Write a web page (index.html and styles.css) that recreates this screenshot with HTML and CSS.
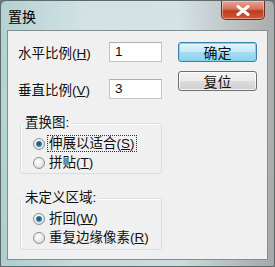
FILE: index.html
```html
<!DOCTYPE html>
<html lang="zh">
<head>
<meta charset="utf-8">
<link rel="stylesheet" href="styles.css">
</head>
<body>
<div class="window">
  <div class="titlebar">
    <span class="title">置换</span>
    <span class="close">
      <svg width="14" height="11" viewBox="0 0 14 11"><path d="M2 1.5 L12 9.5 M12 1.5 L2 9.5" stroke="#fff" stroke-width="3" stroke-linecap="round"/></svg>
    </span>
  </div>
  <div class="client">
    <div class="left">
      <div class="row">
        <span class="label">水平比例(<u>H</u>)</span>
        <span class="input">1</span>
      </div>
      <div class="row">
        <span class="label">垂直比例(<u>V</u>)</span>
        <span class="input">3</span>
      </div>
      <div class="group g1">
        <span class="legend">置换图:</span>
        <div class="opt"><span class="radio on"></span><span class="focus">伸展以适合(<u>S</u>)</span></div>
        <div class="opt"><span class="radio"></span><span class="txt">拼贴(<u>T</u>)</span></div>
      </div>
      <div class="group g2">
        <span class="legend">未定义区域:</span>
        <div class="opt"><span class="radio on"></span><span class="txt">折回(<u>W</u>)</span></div>
        <div class="opt"><span class="radio"></span><span class="txt">重复边缘像素(<u>R</u>)</span></div>
      </div>
    </div>
    <div class="right">
      <span class="btn default">确定</span>
      <span class="btn">复位</span>
    </div>
  </div>
</div>
</body>
</html>
```
FILE: styles.css
```css
* { box-sizing: border-box; }
html, body { margin: 0; padding: 0; }
body {
  width: 275px; height: 267px; overflow: hidden;
  font-family: "Liberation Sans", "Noto Sans CJK SC", sans-serif;
  font-size: 13px; color: #111;
  background: #6d7779;
}
.window {
  width: 275px; height: 267px;
  border: 1px solid #5f6a6d;
  border-radius: 6px 6px 2px 2px;
  background:
    linear-gradient(90deg, rgba(160,200,200,0.6) 0%, rgba(220,232,234,0.2) 30%, rgba(225,232,234,0.3) 65%, rgba(140,130,125,0.55) 100%),
    linear-gradient(180deg, #cfdfe2 0%, #d6e4e6 40%, #c4d6d8 100%);
  display: flex; flex-direction: column;
  padding: 0 6px 6px 6px;
}
.titlebar {
  height: 29px; display: flex; justify-content: space-between; align-items: flex-start;
}
.title { margin-top: 5px; margin-left: 1px; font-size: 14px; color: #000; }
.close {
  width: 44px; height: 19px; margin-right: 3px;
  border: 1px solid #6e2b22; border-top: none;
  border-radius: 0 0 5px 5px;
  background: linear-gradient(180deg, #e8a596 0%, #d6705c 45%, #bf3a1f 55%, #cf5a3a 100%);
  display: flex; align-items: center; justify-content: center;
  box-shadow: inset 0 0 0 1px rgba(255,220,210,0.5);
}
.client {
  flex: 1;
  background: #f0f0f0;
  border: 1px solid #7f8f92;
  display: flex;
  padding: 11px 0 0 10px;
}
.left { width: 144px; display: flex; flex-direction: column; }
.row { display: flex; justify-content: space-between; align-items: center; height: 20px; }
.row + .row { margin-top: 17px; }
.label { font-size: 13.5px; }
.input {
  width: 53px; height: 20px; background: #fff;
  border: 1px solid #c5c5c5; border-top-color: #abadb3;
  padding-left: 5px; line-height: 18px; font-size: 13.5px;
}
.group {
  position: relative;
  margin-left: 2px; width: 142px; height: 51px;
  border: 1px solid #d5dfe5; border-radius: 3px;
  padding: 10px 0 0 12px;
  box-shadow: inset 1px 1px 0 #fff;
}
.g1 { margin-top: 24px; }
.g2 { margin-top: 24px; height: 52px; }
.legend {
  position: absolute; left: 2px; top: -10px;
  background: #f0f0f0; padding: 0 2px; font-size: 13.5px; line-height: 18px;
}
.opt { display: flex; align-items: center; height: 19px; font-size: 13.5px; }
.radio {
  width: 12px; height: 12px; border-radius: 50%;
  border: 1px solid #8e8f8f;
  background: radial-gradient(circle at 40% 35%, #fff 0%, #e6e6e6 60%, #c9c9c9 100%);
  margin-right: 2px; position: relative; flex: none;
}
.radio.on::after {
  content: ""; position: absolute; left: 2px; top: 2px; width: 6px; height: 6px; border-radius: 50%;
  background: radial-gradient(circle at 50% 45%, #1c4b63 0%, #2a7fa8 55%, #6ec4e6 100%);
}
.focus { border: 1px dotted #333; padding: 0 1px; line-height: 15px; }
.txt { padding: 0 2px; line-height: 17px; }
.right { display: flex; flex-direction: column; margin-left: 16px; }
.btn {
  width: 79px; height: 20px; border: 1px solid #707070; border-radius: 3px;
  background: linear-gradient(180deg, #f2f2f2 0%, #ebebeb 50%, #dddddd 51%, #cfcfcf 100%);
  display: flex; align-items: center; justify-content: center; font-size: 14px;
  box-shadow: inset 0 0 0 1px rgba(255,255,255,0.7);
}
.btn.default {
  border-color: #3c7fb1;
  background: linear-gradient(180deg, #e5f5fc 0%, #c4e8f8 50%, #a6dbf3 51%, #8fd0ee 100%);
  box-shadow: inset 0 0 0 1px #7fd6f4;
}
.btn + .btn { margin-top: 9px; }
```
